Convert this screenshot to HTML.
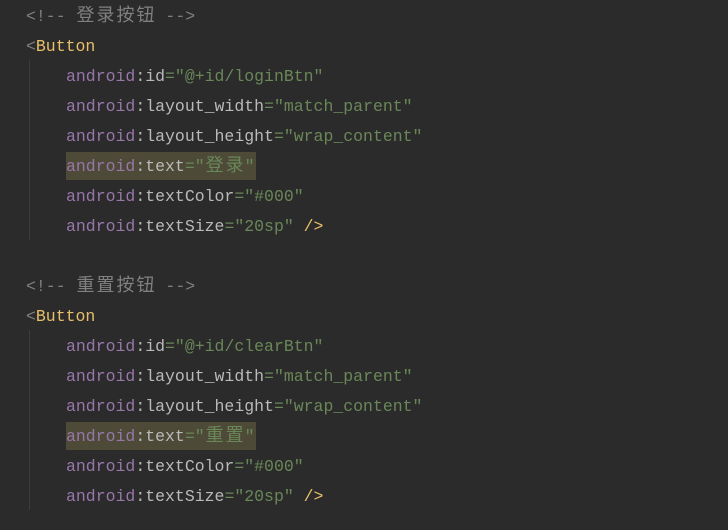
<!DOCTYPE html>
<html><head><meta charset="utf-8"><style>
body{margin:0;width:728px;height:530px;background:#2b2b2b;overflow:hidden;position:relative}
.l{position:absolute;left:0;height:30px;line-height:30px;font-family:"Liberation Mono","Noto Sans CJK SC",monospace;font-size:16.5px;white-space:pre;color:#a9b7c6}
.c{color:#808080}.t{color:#e8bf6a}.a{color:#9876aa}.p{color:#bababa}.v{color:#6a8759}
.z{display:inline-block;width:20px;text-align:center;font-family:"Noto Sans CJK SC",sans-serif;font-size:18px;line-height:0;vertical-align:baseline}
.hl{position:absolute;left:66px;width:190px;height:28px;background:#4d4b37}
.guide{position:absolute;left:29px;width:1px;background:#3b3b3b}
</style></head><body>
<div class="hl" style="top:152px"></div>
<div class="hl" style="top:422px"></div>
<div class="guide" style="top:60px;height:180px"></div>
<div class="guide" style="top:330px;height:180px"></div>
<div class="l" style="top:2px;left:26px"><span class="c">&lt;!-- <span class="z">登</span><span class="z">录</span><span class="z">按</span><span class="z">钮</span> --&gt;</span></div>
<div class="l" style="top:32px;left:26px"><span class="c">&lt;</span><span class="t">Button</span></div>
<div class="l" style="top:62px;left:66px"><span class="a">android</span><span class="p">:id</span><span class="v">="@+id/loginBtn"</span></div>
<div class="l" style="top:92px;left:66px"><span class="a">android</span><span class="p">:layout_width</span><span class="v">="match_parent"</span></div>
<div class="l" style="top:122px;left:66px"><span class="a">android</span><span class="p">:layout_height</span><span class="v">="wrap_content"</span></div>
<div class="l" style="top:152px;left:66px"><span class="a">android</span><span class="p">:text</span><span class="v">="<span class="z">登</span><span class="z">录</span>"</span></div>
<div class="l" style="top:182px;left:66px"><span class="a">android</span><span class="p">:textColor</span><span class="v">="#000"</span></div>
<div class="l" style="top:212px;left:66px"><span class="a">android</span><span class="p">:textSize</span><span class="v">="20sp"</span> <span class="t">/&gt;</span></div>
<div class="l" style="top:272px;left:26px"><span class="c">&lt;!-- <span class="z">重</span><span class="z">置</span><span class="z">按</span><span class="z">钮</span> --&gt;</span></div>
<div class="l" style="top:302px;left:26px"><span class="c">&lt;</span><span class="t">Button</span></div>
<div class="l" style="top:332px;left:66px"><span class="a">android</span><span class="p">:id</span><span class="v">="@+id/clearBtn"</span></div>
<div class="l" style="top:362px;left:66px"><span class="a">android</span><span class="p">:layout_width</span><span class="v">="match_parent"</span></div>
<div class="l" style="top:392px;left:66px"><span class="a">android</span><span class="p">:layout_height</span><span class="v">="wrap_content"</span></div>
<div class="l" style="top:422px;left:66px"><span class="a">android</span><span class="p">:text</span><span class="v">="<span class="z">重</span><span class="z">置</span>"</span></div>
<div class="l" style="top:452px;left:66px"><span class="a">android</span><span class="p">:textColor</span><span class="v">="#000"</span></div>
<div class="l" style="top:482px;left:66px"><span class="a">android</span><span class="p">:textSize</span><span class="v">="20sp"</span> <span class="t">/&gt;</span></div>
</body></html>
